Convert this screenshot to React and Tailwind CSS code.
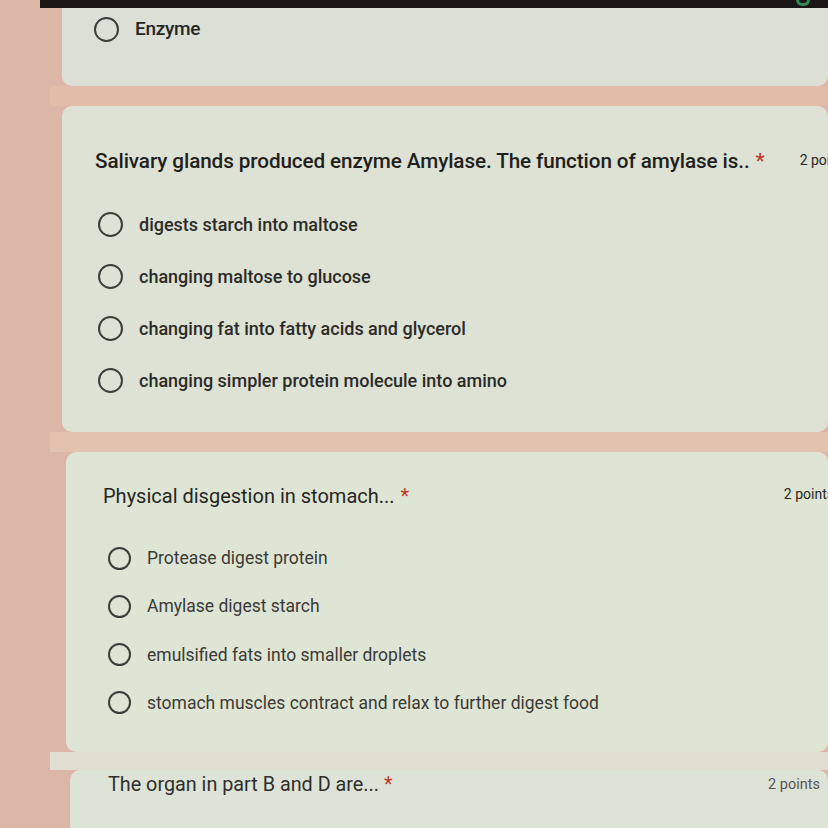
import React from "react"

const Radio = ({ size = "w-[24px] h-[24px]" }) => (
  <span className={`${size} shrink-0 rounded-full border-[2.5px] border-[#3d3d3a]`} />
)

const Option = ({ label, text, gap, radio }) => (
  <div className={`flex items-center ${gap}`}>
    <Radio size={radio} />
    <span className={text}>{label}</span>
  </div>
)

export default function App() {
  const amylase = [
    "digests starch into maltose",
    "changing maltose to glucose",
    "changing fat into fatty acids and glycerol",
    "changing simpler protein molecule into amino",
  ]
  const stomach = [
    "Protease digest protein",
    "Amylase digest starch",
    "emulsified fats into smaller droplets",
    "stomach muscles contract and relax to further digest food",
  ]

  return (
    <div
      className="w-[828px] h-[828px] overflow-hidden bg-[#dcb6a6] text-[#262624]"
      style={{ fontFamily: "Roboto, 'Liberation Sans', sans-serif" }}
    >
      <div className="ml-[40px] h-[8px] bg-[#1b1616] relative">
        <span className="absolute right-[18px] -top-[6px] w-[14px] h-[12px] rounded-full border-[3px] border-[#2f8a55]" />
      </div>

      {/* card: enzyme */}
      <div className="ml-[62px] h-[78px] rounded-b-[10px] bg-[#dcdfd6] pl-[32px] pt-[7px]">
        <div className="flex items-center gap-[16px]">
          <Radio size="w-[25px] h-[25px]" />
          <span className="text-[19px] font-medium tracking-[-0.3px]">Enzyme</span>
        </div>
      </div>

      <div className="h-[20px] bg-[#e2bca9] ml-[50px]" />

      {/* card: salivary */}
      <div className="ml-[62px] h-[326px] rounded-[10px] bg-[#dee2d4] pl-[33px] pt-[40px]">
        <div className="flex items-start">
          <span className="text-[20.7px] font-medium tracking-[-0.1px] text-[#1f1f1d] whitespace-nowrap">
            Salivary glands produced enzyme Amylase. The function of amylase is..
            <span className="text-[#c0392b] ml-[6px]">*</span>
          </span>
          <span className="ml-[35px] mt-[4px] text-[14px] whitespace-nowrap">2 points</span>
        </div>
        <div className="mt-[34px] ml-[3px] flex flex-col gap-[25px]">
          {amylase.map((a) => (
            <Option
              key={a}
              label={a}
              gap="gap-[16px]"
              radio="w-[25px] h-[25px]"
              text="text-[18px] font-medium text-[#2b2b28]"
            />
          ))}
        </div>
      </div>

      <div className="h-[20px] bg-[#e3c3b0] ml-[50px]" />

      {/* card: stomach */}
      <div className="ml-[66px] h-[300px] rounded-[10px] bg-[#dfe5d5] pl-[37px] pt-[29px]">
        <div className="flex items-start">
          <span className="text-[20px] text-[#252523] whitespace-nowrap">
            Physical disgestion in stomach...
            <span className="text-[#c0392b] ml-[6px]">*</span>
          </span>
          <span className="ml-auto mr-[-6px] mt-[3px] text-[14px] whitespace-nowrap">2 points</span>
        </div>
        <div className="mt-[34px] ml-[5px] flex flex-col gap-[22px]">
          {stomach.map((s) => (
            <Option
              key={s}
              label={s}
              gap="gap-[16px]"
              radio="w-[23px] h-[23px]"
              text="text-[17.5px] text-[#3a3a37]"
            />
          ))}
        </div>
      </div>

      <div className="h-[18px] bg-[#e0ddd1] ml-[50px]" />

      {/* card: organ */}
      <div className="ml-[70px] h-[100px] rounded-t-[10px] bg-[#dee3d7] pl-[38px] pt-[0px]">
        <div className="flex items-start">
          <span className="text-[19.8px] text-[#2e2e2b] whitespace-nowrap">
            The organ in part B and D are...
            <span className="text-[#c0392b] ml-[5px]">*</span>
          </span>
          <span className="ml-auto mr-[8px] mt-[4px] text-[14.5px] text-[#555] whitespace-nowrap">2 points</span>
        </div>
      </div>
    </div>
  )
}
